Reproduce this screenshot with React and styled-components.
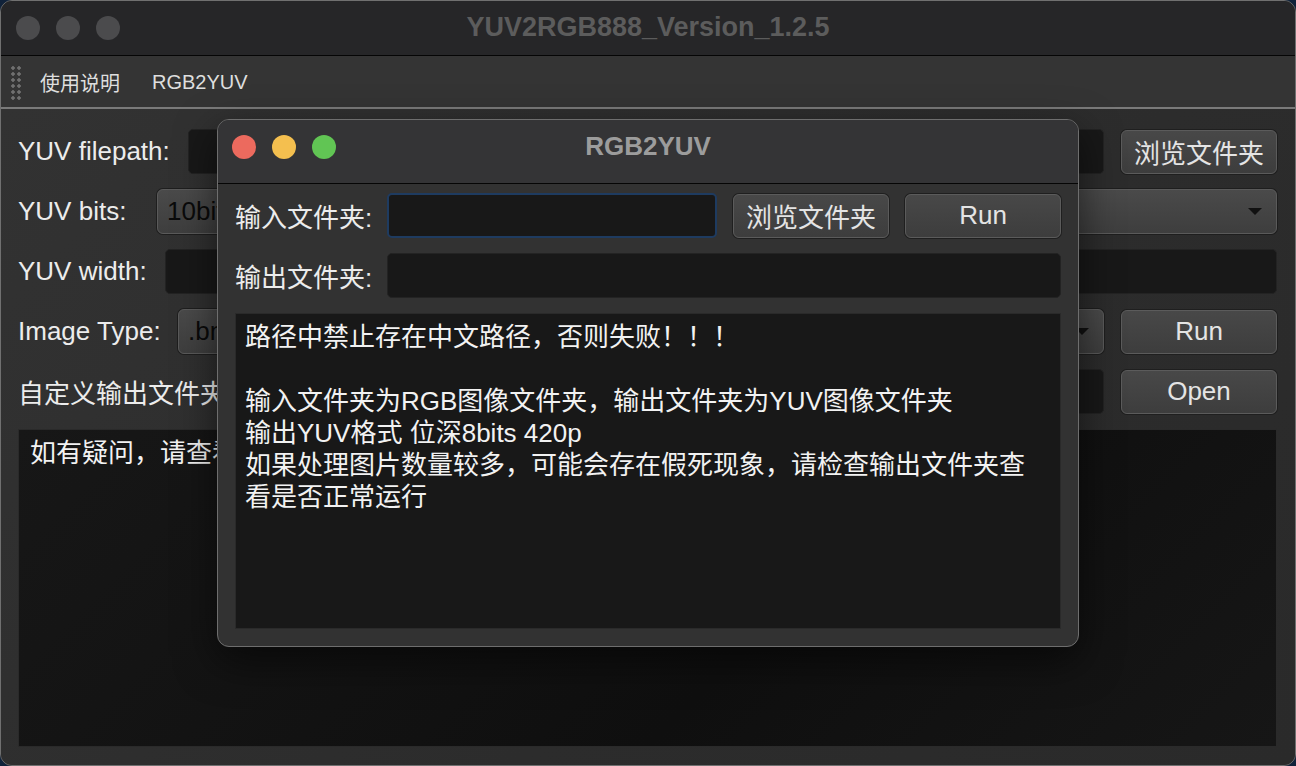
import React from "react";
import styled, { createGlobalStyle } from "styled-components";

const font = `"Liberation Sans", "Noto Sans CJK SC", sans-serif`;

const GlobalStyle = createGlobalStyle`
  html, body {
    margin: 0;
    padding: 0;
    background: #10223a;
    overflow: hidden;
  }
  #root {
    width: 1296px;
    height: 766px;
  }
`;

const Window = styled.div`
  position: relative;
  box-sizing: border-box;
  width: 1296px;
  height: 766px;
  border: 1px solid #707070;
  border-radius: 12px;
  overflow: hidden;
  display: flex;
  flex-direction: column;
  background: #2d2d2d;
  font-family: ${font};
`;

const TitleBar = styled.div`
  flex: none;
  box-sizing: border-box;
  height: ${(p) => p.$height}px;
  padding: 0 ${(p) => p.$inset}px ${(p) => p.$lift}px;
  display: grid;
  grid-template-columns: 1fr auto 1fr;
  align-items: center;
  background: ${(p) => p.$bg};
  border-bottom: 1px solid #050505;
`;

const Lights = styled.div`
  display: flex;
  gap: 16px;
`;

const Light = styled.span`
  width: 24px;
  height: 24px;
  border-radius: 50%;
  background: ${(p) => p.$color};
`;

const TitleText = styled.div`
  font-size: ${(p) => p.$size}px;
  font-weight: 700;
  color: ${(p) => p.$color};
  white-space: nowrap;
`;

const MenuBar = styled.div`
  flex: none;
  box-sizing: border-box;
  height: 53px;
  display: flex;
  align-items: center;
  padding: 2px 0 0 9px;
  background: #343434;
  border-bottom: 2px solid #7a7a7a;
`;

const Grip = styled.div`
  width: 12px;
  height: 36px;
  margin-right: 2px;
  background-image: radial-gradient(circle, #707070 1.5px, transparent 1.9px);
  background-size: 6px 6px;
`;

const MenuItem = styled.div`
  padding: 0 16px;
  font-size: 20px;
  color: #dedede;
`;

const Content = styled.div`
  flex: 1;
  display: flex;
  flex-direction: column;
  gap: 15px;
  padding: 20px 18px 18px 17px;
  background: linear-gradient(135deg, #323232 0%, #2c2c2c 60%, #2a2a2a 100%);
`;

const Row = styled.div`
  flex: none;
  height: 45px;
  display: flex;
  align-items: center;
`;

const Label = styled.div`
  flex: none;
  width: ${(p) => p.$width}px;
  font-size: 26px;
  color: #ececec;
  white-space: nowrap;
`;

const Input = styled.div`
  flex: 1;
  align-self: stretch;
  box-sizing: border-box;
  background: #181818;
  border: ${(p) => (p.$focus ? "2px solid #1e3b60" : "1px solid #232323")};
  border-radius: 5px;
`;

const Combo = styled.div`
  flex: 1;
  align-self: stretch;
  box-sizing: border-box;
  display: flex;
  align-items: center;
  justify-content: space-between;
  padding: 0 14px 0 9px;
  background: linear-gradient(#4a4a4a, #3e3e3e);
  border: 1px solid #5a5a5a;
  box-shadow: 0 0 0 1px #1e1e1e;
  border-radius: 6px;
  font-size: 26px;
  color: #0a0a0a;
`;

const Arrow = styled.span`
  width: 0;
  height: 0;
  border-left: 7px solid transparent;
  border-right: 7px solid transparent;
  border-top: 7px solid #111;
`;

const Button = styled.div`
  flex: none;
  box-sizing: border-box;
  width: 156px;
  height: 44px;
  margin-left: ${(p) => p.$space || 0}px;
  display: flex;
  align-items: center;
  justify-content: center;
  background: linear-gradient(#484848, #3d3d3d);
  border: 1px solid #5b5b5b;
  box-shadow: 0 0 0 1px #1f1f1f;
  border-radius: 6px;
  font-size: 26px;
  color: #e4e4e4;
`;

const TextArea = styled.div`
  flex: 1;
  box-sizing: border-box;
  padding: 7px ${(p) => p.$padX}px;
  background: ${(p) => p.$bg};
  border: 1px solid #2a2a2a;
  font-size: 26px;
  line-height: 32px;
  color: #f2f2f2;
  white-space: pre-wrap;
`;

const Dialog = styled.div`
  position: absolute;
  left: 216px;
  top: 118px;
  width: 862px;
  height: 528px;
  box-sizing: border-box;
  display: flex;
  flex-direction: column;
  border: 1px solid #6e6e6e;
  border-radius: 12px;
  overflow: hidden;
  background: #323232;
  box-shadow: 0 14px 40px rgba(0, 0, 0, 0.55);
`;

const DialogBody = styled.div`
  flex: 1;
  display: flex;
  flex-direction: column;
  gap: 15px;
  padding: 9px 17px 17px 17px;
`;

const dialogText = `路径中禁止存在中文路径，否则失败！！！

输入文件夹为RGB图像文件夹，输出文件夹为YUV图像文件夹
输出YUV格式 位深8bits 420p
如果处理图片数量较多，可能会存在假死现象，请检查输出文件夹查
看是否正常运行`;

export default function App() {
  return (
    <>
      <GlobalStyle />
      <Window>
        <TitleBar $height={55} $lift={1} $inset={15} $bg="#262628">
          <Lights>
            <Light $color="#4b4b4d" />
            <Light $color="#4b4b4d" />
            <Light $color="#4b4b4d" />
          </Lights>
          <TitleText $size={27} $color="#5c5c5c">YUV2RGB888_Version_1.2.5</TitleText>
          <span />
        </TitleBar>
        <MenuBar>
          <Grip />
          <MenuItem>使用说明</MenuItem>
          <MenuItem>RGB2YUV</MenuItem>
        </MenuBar>
        <Content>
          <Row>
            <Label $width={170}>YUV filepath:</Label>
            <Input />
            <Button $space={17}>浏览文件夹</Button>
          </Row>
          <Row>
            <Label $width={139}>YUV bits:</Label>
            <Combo>
              10bit
              <Arrow />
            </Combo>
          </Row>
          <Row>
            <Label $width={147}>YUV width:</Label>
            <Input />
          </Row>
          <Row>
            <Label $width={160}>Image Type:</Label>
            <Combo>
              .bmp
              <Arrow />
            </Combo>
            <Button $space={17}>Run</Button>
          </Row>
          <Row>
            <Label $width={230}>自定义输出文件夹:</Label>
            <Input />
            <Button $space={17}>Open</Button>
          </Row>
          <TextArea $padX={11} $bg="linear-gradient(135deg, #171717, #0f0f0f 60%, #161616)">
            如有疑问，请查看使用说明
          </TextArea>
        </Content>

        <Dialog>
          <TitleBar $height={64} $lift={10} $inset={14} $bg="#343436">
            <Lights>
              <Light $color="#ec6a5e" />
              <Light $color="#f4bf4f" />
              <Light $color="#61c554" />
            </Lights>
            <TitleText $size={26} $color="#9c9c9c">RGB2YUV</TitleText>
            <span />
          </TitleBar>
          <DialogBody>
            <Row>
              <Label $width={152}>输入文件夹:</Label>
              <Input $focus />
              <Button $space={16}>浏览文件夹</Button>
              <Button $space={16}>Run</Button>
            </Row>
            <Row>
              <Label $width={152}>输出文件夹:</Label>
              <Input />
            </Row>
            <TextArea $padX={9} $bg="#181818">
              {dialogText}
            </TextArea>
          </DialogBody>
        </Dialog>
      </Window>
    </>
  );
}
